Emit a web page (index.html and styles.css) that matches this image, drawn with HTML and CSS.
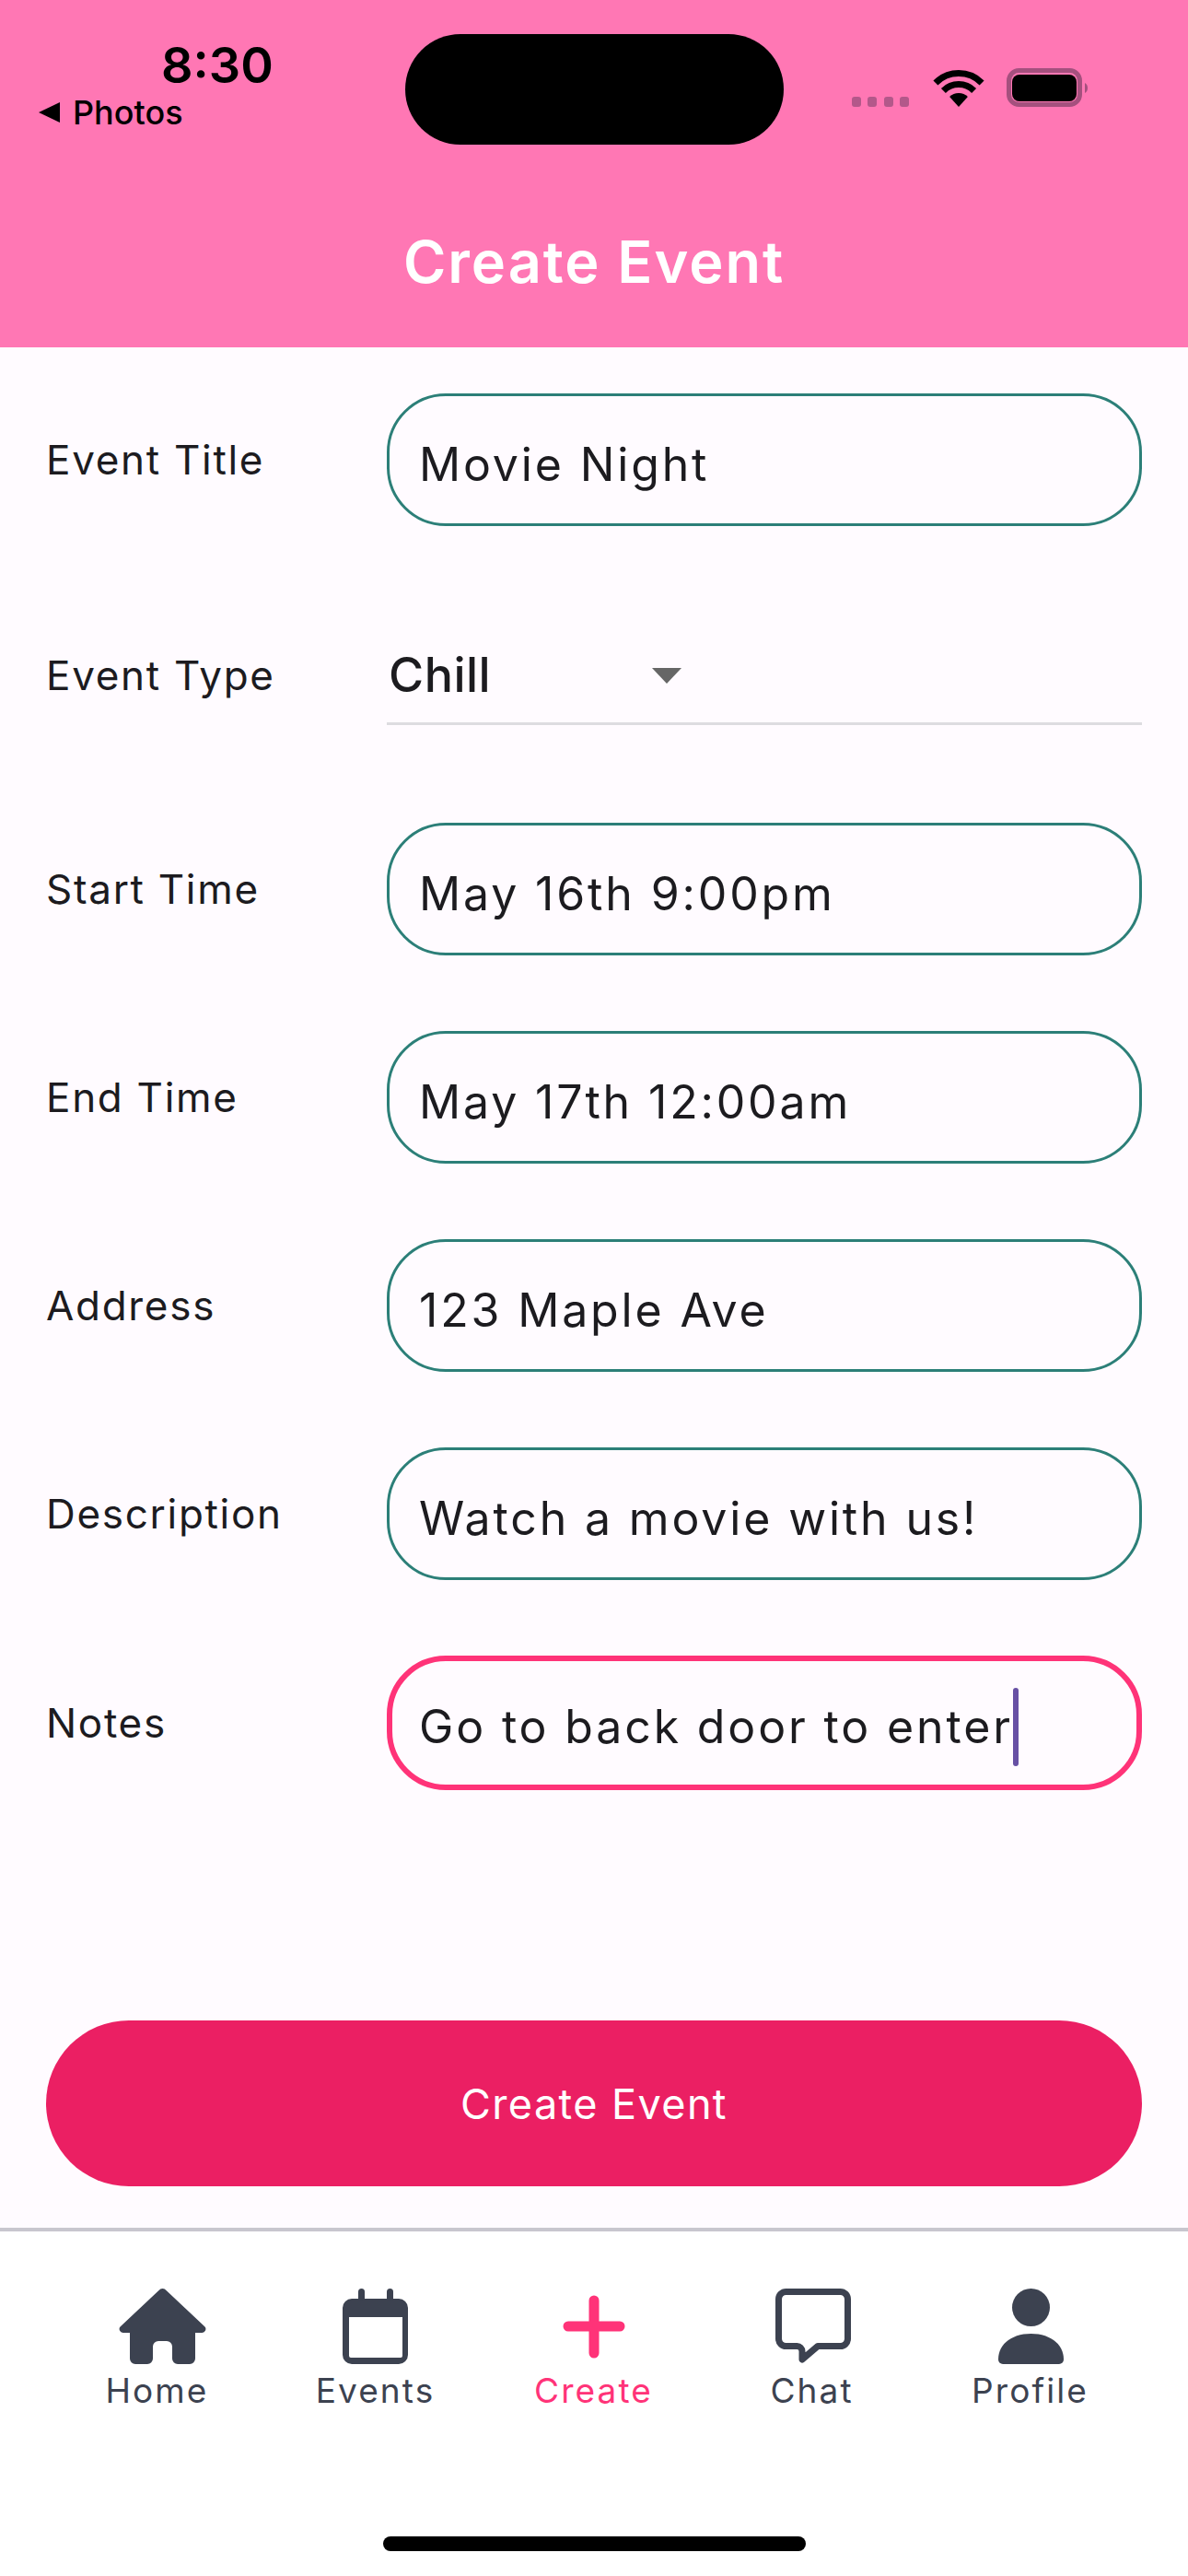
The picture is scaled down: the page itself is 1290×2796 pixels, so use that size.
FILE: index.html
```html
<!DOCTYPE html>
<html lang="en">
<head>
    <meta charset="UTF-8">
    <meta name="viewport" content="width=device-width, initial-scale=1.0">
    <title>Create Event</title>
    <link rel="stylesheet" href="styles.css">
</head>
<body>
    <div class="screen">
        <div class="header">
            <div class="island"></div>
            <div class="status-bar">
                <div class="status-left">
                    <span class="time">8:30</span>
                    <span class="back">
                        <svg class="back-arrow" viewBox="0 0 23 22"><path d="M23 0V22L0 11Z"/></svg>
                        Photos
                    </span>
                </div>
                <div class="status-right">
                    <div class="signal"><i></i><i></i><i></i><i></i></div>
                    <svg class="wifi" viewBox="0 0 56 41">
                        <path d="M2.9 14.9A35.5 35.5 0 0 1 53.1 14.9" fill="none" stroke="#000" stroke-width="7"/>
                        <path d="M11.4 23.4A23.5 23.5 0 0 1 44.6 23.4" fill="none" stroke="#000" stroke-width="7"/>
                        <path d="M28 41L18.1 30.1A14 14 0 0 1 37.9 30.1Z"/>
                    </svg>
                    <svg class="battery" viewBox="0 0 90 42">
                        <rect x="2.5" y="2.5" width="77" height="37" rx="11" fill="none" stroke="#a5507e" stroke-width="5"/>
                        <rect x="6" y="7" width="70" height="29" rx="8"/>
                        <path d="M85 16C89 18 89 25 85 27Z" fill="#a5507e"/>
                    </svg>
                </div>
            </div>
            <h1 class="title">Create Event</h1>
        </div>

        <div class="main">
            <div class="form">
                <div class="row">
                    <label class="label">Event Title</label>
                    <div class="field">Movie Night</div>
                </div>
                <div class="row row-select">
                    <label class="label">Event Type</label>
                    <div class="select">
                        <span class="select-value">Chill</span>
                        <span class="select-arrow"></span>
                    </div>
                </div>
                <div class="row">
                    <label class="label">Start Time</label>
                    <div class="field">May 16th 9:00pm</div>
                </div>
                <div class="row">
                    <label class="label">End Time</label>
                    <div class="field">May 17th 12:00am</div>
                </div>
                <div class="row">
                    <label class="label">Address</label>
                    <div class="field">123 Maple Ave</div>
                </div>
                <div class="row">
                    <label class="label">Description</label>
                    <div class="field">Watch a movie with us!</div>
                </div>
                <div class="row">
                    <label class="label">Notes</label>
                    <div class="field field-active">Go to back door to enter<span class="caret"></span></div>
                </div>
            </div>
            <button class="submit">Create Event</button>
        </div>

        <div class="tabs">
            <a class="tab" href="#">
                <svg class="tab-icon" viewBox="0 0 120 82"><path d="M61.5 2a5 5 0 0 1 8 0L111 41a4 4 0 0 1-3 7H101V76a6 6 0 0 1-6 6H82a6 6 0 0 1-6-6V63a6 6 0 0 0-6-6H61a6 6 0 0 0-6 6V76a6 6 0 0 1-6 6H36a6 6 0 0 1-6-6V48H23a4 4 0 0 1-3-7Z"/></svg>
                <span>Home</span>
            </a>
            <a class="tab" href="#">
                <svg class="tab-icon" viewBox="0 0 120 82">
                    <path fill-rule="evenodd" d="M34 11H85a10 10 0 0 1 10 10V72a10 10 0 0 1-10 10H34a10 10 0 0 1-10-10V21a10 10 0 0 1 10-10ZM31 31V73a2 2 0 0 0 2 2H87a2 2 0 0 0 2-2V31Z"/>
                    <rect x="41" y="0" width="7" height="14" rx="3.5"/>
                    <rect x="72" y="0" width="7" height="14" rx="3.5"/>
                </svg>
                <span>Events</span>
            </a>
            <a class="tab tab-active" href="#">
                <svg class="tab-icon" viewBox="0 0 120 82"><path d="M60 13V70M32 41H88" fill="none" stroke="#ff3378" stroke-width="11" stroke-linecap="round"/></svg>
                <span>Create</span>
            </a>
            <a class="tab" href="#">
                <svg class="tab-icon" viewBox="0 0 120 82"><path d="M31.5 3.5H90.5a8 8 0 0 1 8 8V54.5a8 8 0 0 1-8 8H66L49 77V68a5.5 5.5 0 0 0-5.5-5.5H31.5a8 8 0 0 1-8-8V11.5a8 8 0 0 1 8-8Z" fill="none" stroke="#3c4250" stroke-width="7" stroke-linejoin="round"/></svg>
                <span>Chat</span>
            </a>
            <a class="tab" href="#">
                <svg class="tab-icon" viewBox="0 0 120 82">
                    <circle cx="60.5" cy="20.5" r="20.5"/>
                    <path d="M25 77C25 60 40 49 60.5 49S96 60 96 77a5 5 0 0 1-5 5H30a5 5 0 0 1-5-5Z"/>
                </svg>
                <span>Profile</span>
            </a>
        </div>
        <div class="home-bar"></div>
    </div>
</body>
</html>
```

FILE: styles.css
```css
* {
    margin: 0;
    padding: 0;
    box-sizing: border-box;
    font-family: "Inter", "Liberation Sans", sans-serif;
}
body {
    background-color: #FFFBFF;
}
.screen {
    display: flex;
    flex-direction: column;
    position: relative;
    width: 1290px;
    height: 2796px;
    overflow: hidden;
}

/* header + status bar */
.header {
    position: relative;
    display: flex;
    flex-direction: column;
    height: 377px;
    background-color: #FF77B4;
}
.island {
    position: absolute;
    left: 440px;
    top: 37px;
    width: 411px;
    height: 120px;
    border-radius: 60px;
    background-color: #000;
}
.status-bar {
    display: flex;
    justify-content: space-between;
    height: 246px;
    padding: 40px 107px 0 42px;
}
.status-left {
    display: flex;
    flex-direction: column;
}
.time {
    margin-left: 133px;
    font-size: 54px;
    font-weight: 600;
    line-height: 62px;
    color: #000;
}
.back {
    display: flex;
    align-items: center;
    gap: 14px;
    font-size: 36px;
    font-weight: 500;
    line-height: 40px;
    color: #000;
}
.back-arrow {
    width: 23px;
    height: 22px;
}
.status-right {
    display: flex;
    align-items: flex-end;
    height: 76px;
}
.signal {
    display: flex;
    gap: 7.5px;
    margin-right: 26px;
}
.signal i {
    width: 10px;
    height: 11px;
    border-radius: 3px;
    background-color: #B3588A;
}
.wifi {
    width: 56px;
    height: 41px;
    margin-right: 24px;
}
.battery {
    width: 90px;
    height: 42px;
}
.title {
    font-size: 63px;
    font-weight: 600;
    line-height: 76px;
    letter-spacing: 1.95px;
    text-align: center;
    color: #FFF;
}

/* form */
.main {
    flex-grow: 1;
    display: flex;
    flex-direction: column;
    justify-content: space-between;
    padding: 50px 50px 45px;
}
.form {
    display: flex;
    flex-direction: column;
}
.row {
    display: flex;
    align-items: center;
    margin-bottom: 82px;
}
.row-select {
    margin-top: 27px;
    margin-bottom: 106px;
}
.label {
    width: 370px;
    font-size: 44px;
    line-height: 52px;
    letter-spacing: 1.7px;
    color: #1C1B1F;
}
.row-select .label {
    margin-bottom: 2px;
}
.field {
    display: flex;
    align-items: center;
    width: 820px;
    height: 144px;
    padding: 10px 32px 0;
    border: 3px solid #2C7F78;
    border-radius: 64px;
    font-size: 50px;
    letter-spacing: 2.85px;
    color: #1C1B1F;
}
.field-active {
    height: 146px;
    padding: 8px 29px 0;
    border: 6px solid #FF3378;
}
.caret {
    width: 6px;
    height: 85px;
    border-radius: 3px;
    background-color: #6750A4;
}
.select {
    display: flex;
    align-items: center;
    width: 820px;
    height: 107px;
    padding-top: 1px;
    border-bottom: 3px solid #DDDCE0;
}
.select-value {
    width: 288px;
    padding-left: 2px;
    font-size: 52px;
    font-weight: 500;
    letter-spacing: 0.5px;
    color: #1C1B1F;
}
.select-arrow {
    width: 0;
    height: 0;
    margin-top: 2px;
    border-top: 17px solid #666;
    border-left: 16px solid transparent;
    border-right: 16px solid transparent;
}
.submit {
    height: 180px;
    border: none;
    border-radius: 90px;
    background-color: #EB1F63;
    font-size: 45px;
    font-weight: 400;
    letter-spacing: 1.4px;
    color: #FFF;
}

/* tab bar */
.tabs {
    display: flex;
    height: 378px;
    padding: 62px 52px 0;
    border-top: 4px solid #C8C6CE;
    background-color: #FFF;
}
.tab {
    display: flex;
    flex-direction: column;
    align-items: center;
    width: 237px;
    text-decoration: none;
    font-size: 37px;
    line-height: 44px;
    letter-spacing: 2.1px;
    color: #3C4250;
}
.tab-icon {
    width: 120px;
    height: 82px;
    margin-bottom: 7px;
    fill: #3C4250;
}
.tab-active {
    color: #FF3378;
}
.home-bar {
    position: absolute;
    left: 416px;
    top: 2753px;
    width: 459px;
    height: 16px;
    border-radius: 8px;
    background-color: #000;
}
```
